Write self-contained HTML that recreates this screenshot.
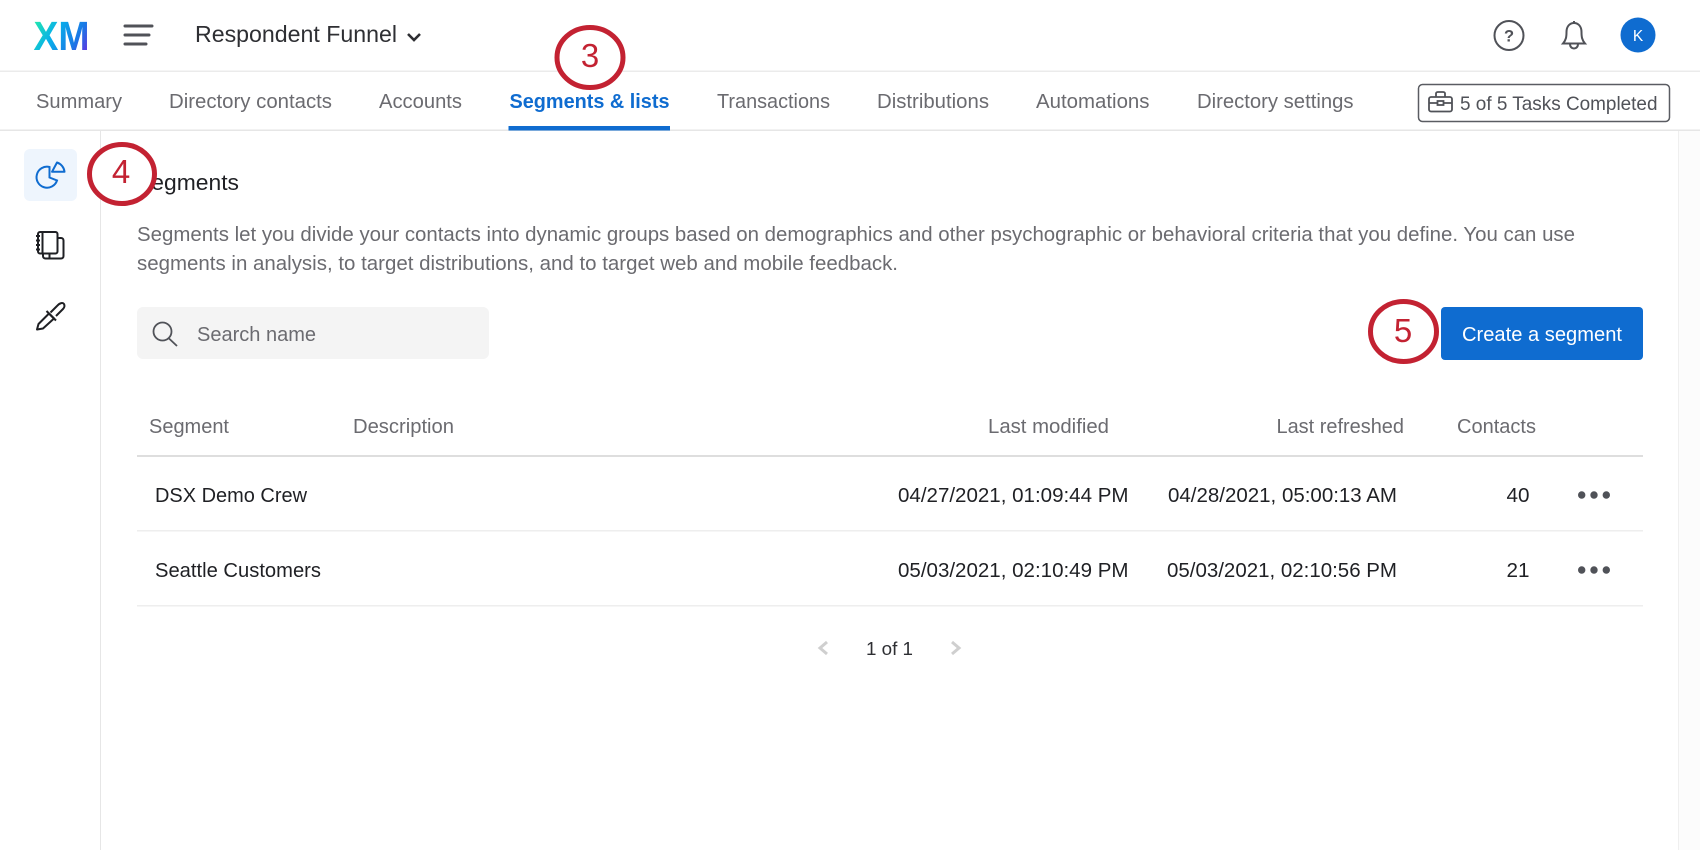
<!DOCTYPE html>
<html lang="en"><head><meta charset="utf-8"><title>Segments &amp; lists</title>
<style>
html,body{margin:0;padding:0;background:#fff;width:1700px;height:850px;overflow:hidden}
svg{display:block}
text{font-family:"Liberation Sans",sans-serif;font-size:20px;fill:#6b6b70}
.d{fill:#1f2024}
.n{font-family:"Liberation Sans",sans-serif;font-size:33px;fill:#c32232;text-anchor:middle}
</style></head><body>
<svg width="1700" height="850" viewBox="0 0 1700 850" xmlns="http://www.w3.org/2000/svg">
<defs><linearGradient id="g" gradientUnits="userSpaceOnUse" x1="36" y1="20" x2="90" y2="51"><stop offset="0" stop-color="#21e6b0"/><stop offset=".35" stop-color="#08b0ea"/><stop offset=".72" stop-color="#1a78e6"/><stop offset="1" stop-color="#6a2be0"/></linearGradient></defs>
<rect width="1700" height="850" fill="#fff"/>

<!-- top bar -->
<text x="33.500" y="50" textLength="56" lengthAdjust="spacingAndGlyphs" style="font-size:41px;font-weight:bold;fill:url(#g)">XM</text>
<g stroke="#505258" stroke-width="3" stroke-linecap="round" fill="none">
<path d="M125 26H152M125 35H149M125 44H146"/></g>
<text x="195" y="42" textLength="202" lengthAdjust="spacingAndGlyphs" style="font-size:23px;fill:#2e2f33">Respondent Funnel</text>
<path d="M408 34L414 40L420 34" fill="none" stroke="#2e2f33" stroke-width="2.6"/>
<circle cx="1509" cy="35.500" r="14.500" fill="none" stroke="#505258" stroke-width="2"/>
<text x="1509" y="41.500" text-anchor="middle" style="font-size:16.500px;font-weight:bold;fill:#505258">?</text>
<path d="M1563 43.500H1585C1582 40 1581.500 37 1581.500 32C1581.500 26 1578 23 1574 23C1570 23 1566.500 26 1566.500 32C1566.500 37 1566 40 1563 43.500ZM1574 23V21M1570 44C1570 50 1578 50 1578 44" fill="none" stroke="#505258" stroke-width="2"/>
<circle cx="1638" cy="35" r="17.500" fill="#0f6cd0"/>
<text x="1638" y="41" text-anchor="middle" style="font-size:15.500px;fill:#fff">K</text>
<rect x="0" y="70.500" width="1700" height="1.500" fill="#ebebeb"/>

<!-- tabs -->
<text x="36" y="108" textLength="86" lengthAdjust="spacingAndGlyphs">Summary</text>
<text x="169" y="108" textLength="163" lengthAdjust="spacingAndGlyphs">Directory contacts</text>
<text x="379" y="108" textLength="83" lengthAdjust="spacingAndGlyphs">Accounts</text>
<text x="509.500" y="108" textLength="160" lengthAdjust="spacingAndGlyphs" style="font-weight:bold;fill:#0f6cd0">Segments &amp; lists</text>
<text x="717" y="108" textLength="113" lengthAdjust="spacingAndGlyphs">Transactions</text>
<text x="877" y="108" textLength="112" lengthAdjust="spacingAndGlyphs">Distributions</text>
<text x="1036" y="108" textLength="113.500" lengthAdjust="spacingAndGlyphs">Automations</text>
<text x="1197" y="108" textLength="156.500" lengthAdjust="spacingAndGlyphs">Directory settings</text>
<rect x="0" y="129.500" width="1700" height="1.500" fill="#e6e6e6"/>
<rect x="508.500" y="126" width="161.500" height="4.500" fill="#0f6cd0"/>

<rect x="1418.500" y="84.500" width="251" height="37" rx="4" fill="#fff" stroke="#5a5c62" stroke-width="1.500"/>
<g fill="none" stroke="#505258" stroke-width="1.800">
<rect x="1429" y="97" width="23" height="14.500" rx="2"/>
<path d="M1436 97V93.500C1436 92.500 1437 92 1438 92H1443C1444 92 1445 92.500 1445 93.500V97M1429 103H1437.500M1443.500 103H1452"/>
<rect x="1437.500" y="101" width="6" height="4"/>
</g>
<text x="1460" y="110" textLength="197.500" lengthAdjust="spacingAndGlyphs" style="font-size:19.500px;fill:#505258">5 of 5 Tasks Completed</text>

<!-- scrollbar -->
<rect x="1678" y="131" width="22" height="719" fill="#fcfcfc"/>
<rect x="1678" y="131" width="1" height="719" fill="#efefef"/>

<!-- sidebar -->
<rect x="100" y="131" width="1" height="719" fill="#e6e6e6"/>
<rect x="24" y="149" width="53" height="52" rx="6" fill="#eef5fd"/>
<g fill="none" stroke="#0f6cd0" stroke-width="2">
<path d="M49.500 167A10.500 10.500 0 1 0 57 180.500L49.500 177.500Z"/>
<path d="M52 171.800L57 162.500A11 11 0 0 1 64.500 171.800Z" stroke-linejoin="round"/>
</g>
<g fill="none" stroke="#1f2024" stroke-width="2">
<rect x="38" y="232" width="19.500" height="21.500" rx="2"/>
<path d="M42.500 232V253.500M36 236H40M36 240.500H40M36 245H40M36 249.500H40"/>
<path d="M57.500 238H61C62.500 238 63.500 239 63.500 240.500V256C63.500 257.500 62.500 258.500 61 258.500H45.500C44 258.500 43 257.500 43 256V253.500M49.500 253.500V258.500"/>
</g>
<g fill="none" stroke="#1f2024" stroke-width="2" stroke-linejoin="round">
<path d="M37 329.500L38.500 324L49 313.500L54 318.500L43 328.500Z"/>
<path d="M46.500 311L56 320.500"/>
<path d="M50.500 312.500L57 306C60 302.500 63 302.500 64 304C65 306 64.500 307.500 63 309L56 316"/>
</g>

<!-- content -->
<text x="136" y="190" textLength="103" lengthAdjust="spacingAndGlyphs" style="font-size:22px;fill:#1f2024">Segments</text>
<text x="137" y="241" textLength="1438" lengthAdjust="spacingAndGlyphs" style="font-size:20px">Segments let you divide your contacts into dynamic groups based on demographics and other psychographic or behavioral criteria that you define. You can use</text>
<text x="137" y="270" textLength="761" lengthAdjust="spacingAndGlyphs" style="font-size:20px">segments in analysis, to target distributions, and to target web and mobile feedback.</text>

<rect x="137" y="307" width="352" height="52" rx="6" fill="#f4f4f4"/>
<circle cx="162.500" cy="331.500" r="9" fill="none" stroke="#505258" stroke-width="1.800"/>
<path d="M168.500 338L177 346" stroke="#505258" stroke-width="1.800" fill="none"/>
<text x="197" y="341" textLength="119" lengthAdjust="spacingAndGlyphs">Search name</text>

<rect x="1441" y="307" width="202" height="53" rx="4" fill="#0f6cd0"/>
<text x="1462" y="341" textLength="160" lengthAdjust="spacingAndGlyphs" style="fill:#fff">Create a segment</text>

<!-- table -->
<text x="149" y="433" textLength="80" lengthAdjust="spacingAndGlyphs">Segment</text>
<text x="353" y="433" textLength="101" lengthAdjust="spacingAndGlyphs">Description</text>
<text x="988" y="433" textLength="121" lengthAdjust="spacingAndGlyphs">Last modified</text>
<text x="1276.500" y="433" textLength="127.500" lengthAdjust="spacingAndGlyphs">Last refreshed</text>
<text x="1457" y="433" textLength="79" lengthAdjust="spacingAndGlyphs">Contacts</text>
<rect x="137" y="455" width="1506" height="2" fill="#dedede"/>
<rect x="137" y="530" width="1506" height="1.500" fill="#eeeeee"/>
<rect x="137" y="605" width="1506" height="1.500" fill="#eeeeee"/>

<text class="d" x="155" y="502" textLength="152" lengthAdjust="spacingAndGlyphs">DSX Demo Crew</text>
<text class="d" x="898" y="502" textLength="230.500" lengthAdjust="spacingAndGlyphs">04/27/2021, 01:09:44 PM</text>
<text class="d" x="1168" y="502" textLength="229" lengthAdjust="spacingAndGlyphs">04/28/2021, 05:00:13 AM</text>
<text class="d" x="1506.500" y="502" textLength="23" lengthAdjust="spacingAndGlyphs">40</text>
<text class="d" x="155" y="577" textLength="166" lengthAdjust="spacingAndGlyphs">Seattle Customers</text>
<text class="d" x="898" y="577" textLength="230.500" lengthAdjust="spacingAndGlyphs">05/03/2021, 02:10:49 PM</text>
<text class="d" x="1167" y="577" textLength="230" lengthAdjust="spacingAndGlyphs">05/03/2021, 02:10:56 PM</text>
<text class="d" x="1506.500" y="577" textLength="23" lengthAdjust="spacingAndGlyphs">21</text>
<g fill="#505258">
<circle cx="1581.700" cy="495" r="3.700"/><circle cx="1594" cy="495" r="3.700"/><circle cx="1606.300" cy="495" r="3.700"/>
<circle cx="1581.700" cy="570" r="3.700"/><circle cx="1594" cy="570" r="3.700"/><circle cx="1606.300" cy="570" r="3.700"/>
</g>

<!-- pagination -->
<path d="M827 642L820 648L827 654M952 642L959 648L952 654" fill="none" stroke="#cfcfcf" stroke-width="3"/>
<text class="d" x="866" y="655" textLength="47" lengthAdjust="spacingAndGlyphs" style="font-size:18px;fill:#2e2f33">1 of 1</text>

<!-- annotations -->
<g fill="#fff" stroke="#c32232" stroke-width="5">
<ellipse cx="590" cy="57.500" rx="33" ry="30"/>
<ellipse cx="122" cy="174" rx="32.500" ry="29.500"/>
<ellipse cx="1403.500" cy="331.500" rx="33" ry="30"/>
</g>
<text class="n" x="590" y="67">3</text>
<text class="n" x="121" y="183">4</text>
<text class="n" x="1403" y="342">5</text>
</svg>
</body></html>
